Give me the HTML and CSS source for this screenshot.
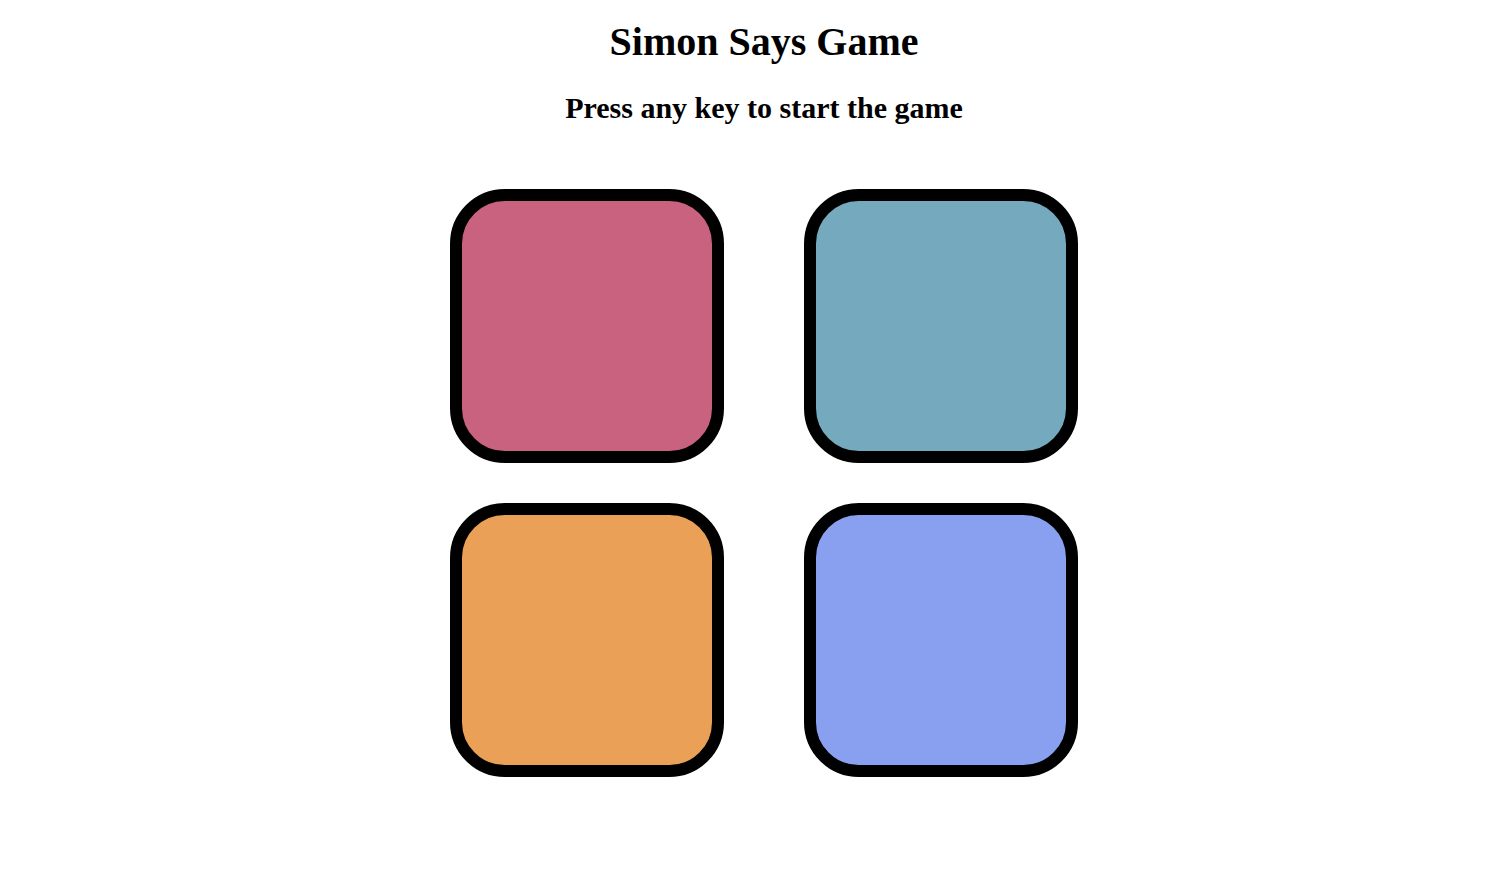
FILE: index.html
```html
<!DOCTYPE html>
<html lang="en">
<head>
    <meta charset="UTF-8">
    <meta name="viewport" content="width=device-width, initial-scale=1.0">
    <title>Simon Says Game</title>
    <link rel="stylesheet" href="styles.css">
</head>
<body>
    <h1>Simon Says Game</h1>
    <h2>Press any key to start the game</h2>

    <div class="btn-container">
        <div class="line-one">
            <div class="btn red" id="red"></div>
            <div class="btn yellow" id="yellow"></div>
        </div>
        <div class="line-two">
            <div class="btn green" id="green"></div>
            <div class="btn purple" id="purple"></div>
        </div>
    </div>
</body>
</html>
```

FILE: styles.css
```css
body {
    font-family: "Liberation Serif", "Times New Roman", serif;
    text-align: center;
    margin: 0;
    padding: 0 0 0 41px;
    background-color: #ffffff;
    color: #000000;
}

h1 {
    font-size: 40px;
    margin: 18px 0 0;
}

h2 {
    font-size: 30px;
    margin: 26px 0 0;
}

.btn-container {
    display: flex;
    flex-direction: column;
    align-items: center;
    gap: 40px;
    margin-top: 64px;
}

.line-one,
.line-two {
    display: flex;
    gap: 80px;
}

.btn {
    width: 250px;
    height: 250px;
    border: 12px solid #000000;
    border-radius: 20%;
}

.red {
    background-color: #c9627e;
}

.yellow {
    background-color: #74a9be;
}

.green {
    background-color: #eba058;
}

.purple {
    background-color: #89a0f1;
}
```
